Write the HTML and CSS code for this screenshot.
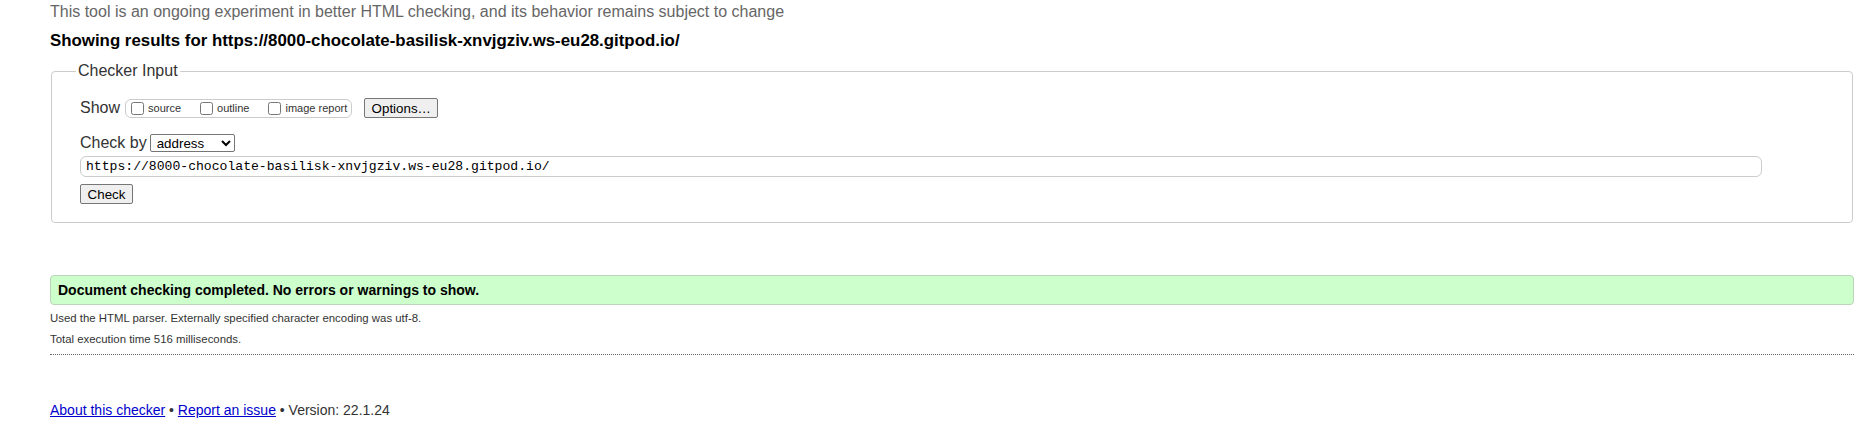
FILE: index.html
```html
<!DOCTYPE html>
<html lang="en">
<head>
<meta charset="utf-8">
<title>Nu Html Checker</title>
<link rel="stylesheet" href="styles.css">
</head>
<body>
<p class="note">This tool is an ongoing experiment in better HTML checking, and its behavior remains subject to change</p>
<p class="showing">Showing results for https://8000-chocolate-basilisk-xnvjgziv.ws-eu28.gitpod.io/</p>
<form class="checker">
  <fieldset class="input-set">
    <legend class="input-legend">Checker Input</legend>
    <div class="row show-row">
      <span class="row-label">Show</span>
      <div class="show-group">
        <label class="opt"><input type="checkbox" class="cb"><span>source</span></label>
        <label class="opt"><input type="checkbox" class="cb"><span>outline</span></label>
        <label class="opt"><input type="checkbox" class="cb"><span>image report</span></label>
      </div>
      <button type="button" class="btn options-btn">Options…</button>
    </div>
    <div class="row by-row">
      <span class="row-label">Check by</span>
      <select class="by-select"><option>address</option><option>file upload</option><option>text input</option></select>
    </div>
    <div class="url-row">
      <input class="url" type="text" value="https://8000-chocolate-basilisk-xnvjgziv.ws-eu28.gitpod.io/">
    </div>
    <div class="submit-row">
      <button type="button" class="btn check-btn">Check</button>
    </div>
  </fieldset>
</form>
<div class="results">
  <p class="success">Document checking completed. No errors or warnings to show.</p>
  <p class="meta">Used the HTML parser. Externally specified character encoding was utf-8.</p>
  <p class="meta">Total execution time 516 milliseconds.</p>
</div>
<p class="footer"><a href="#">About this checker</a> • <a href="#">Report an issue</a> • Version: 22.1.24</p>
</body>
</html>
```
FILE: styles.css
```css
html, body {
  background: #fff;
}
body {
  margin: 0;
  padding: 2px 7px 0 50px;
  font-family: "Liberation Sans", Arial, sans-serif;
  color: #333;
}
.note {
  margin: 0;
  font-size: 16px;
  line-height: 20px;
  color: #666;
}
.showing {
  margin: 9px 0 0;
  font-size: 16.85px;
  line-height: 20px;
  font-weight: bold;
  color: #000;
}
.checker {
  margin: 11px 0 0;
}
.input-set {
  margin: 0 1px;
  padding: 18px 28px 18px 28px;
  border: 1px solid #ccc;
  border-radius: 4px;
}
.input-legend {
  margin-left: -4px;
  padding: 0 2px;
  font-size: 16px;
  line-height: 18px;
  color: #333;
}
.row {
  display: flex;
  align-items: center;
  height: 20px;
}
.row-label {
  font-size: 16px;
  line-height: 20px;
  color: #333;
}
.show-group {
  display: flex;
  align-items: center;
  margin-left: 5px;
  padding: 0 4px 0 2px;
  border: 1px solid #ccc;
  border-radius: 6px;
  height: 17px;
}
.opt {
  display: flex;
  align-items: center;
  font-size: 11px;
  color: #333;
  margin-right: 16px;
}
.opt:last-child {
  margin-right: 0;
}
.cb {
  width: 13px;
  height: 13px;
  margin: 2px 4px 2px 3px;
}
.btn {
  font-family: "Liberation Sans", Arial, sans-serif;
  font-size: 13.33px;
  height: 20px;
  padding: 0 6px;
  border: 1px solid #767676;
  border-radius: 2px;
  background: #efefef;
  color: #000;
}
.options-btn {
  margin-left: 12px;
  width: 74px;
}
.by-row {
  margin-top: 15px;
}
.by-select {
  margin-left: 3px;
  width: 85px;
  height: 18px;
  font-family: "Liberation Sans", Arial, sans-serif;
  font-size: 13.33px;
  border: 1px solid #767676;
  border-radius: 2px;
  background: #fff;
  color: #000;
  padding: 0 2px;
}
.url-row {
  margin-top: 3px;
}
.url {
  display: block;
  box-sizing: border-box;
  width: calc(100% - 62px);
  height: 21px;
  padding: 0 5px;
  border: 1px solid #ccc;
  border-radius: 6px;
  font-family: "Liberation Mono", "DejaVu Sans Mono", monospace;
  font-size: 13.1px;
  color: #000;
}
.submit-row {
  margin-top: 7px;
}
.check-btn {
  width: 53px;
}
.results {
  margin-top: 52px;
  padding-bottom: 7px;
  border-bottom: 1px dotted #666;
}
.success {
  margin: 0;
  padding: 0 7px;
  height: 28px;
  line-height: 28px;
  background: #ccffcc;
  border: 1px solid #bbd4bb;
  border-radius: 4px;
  font-size: 14px;
  font-weight: bold;
  color: #000;
}
.meta {
  margin: 5px 0 0;
  font-size: 11.4px;
  line-height: 16px;
  color: #333;
}
.footer {
  margin: 46px 0 0;
  font-size: 14px;
  line-height: 18px;
  color: #333;
}
.footer a {
  color: #00c;
}
```
